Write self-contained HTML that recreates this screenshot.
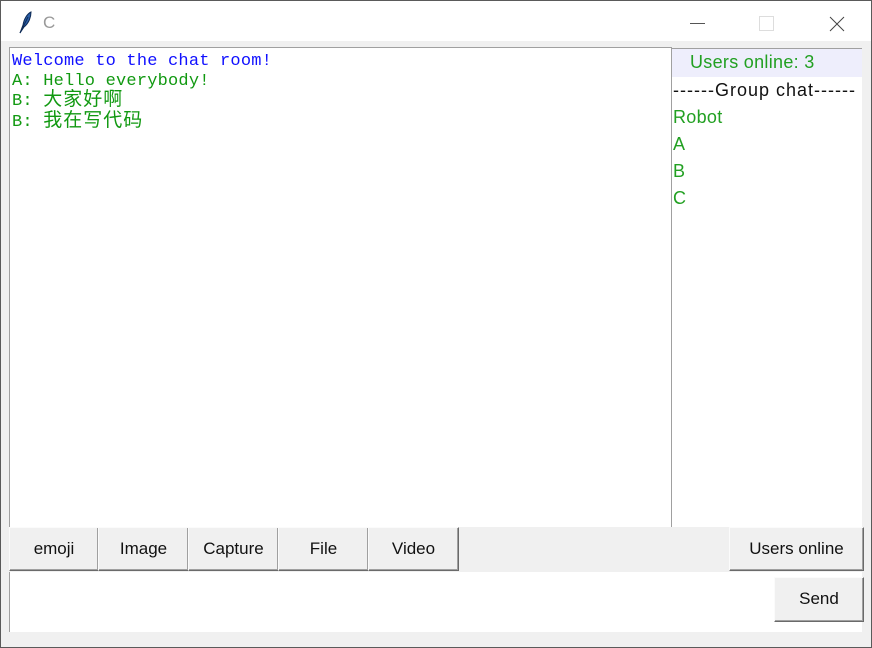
<!DOCTYPE html>
<html><head><meta charset="utf-8"><style>
*{margin:0;padding:0;box-sizing:border-box}
body{width:872px;height:648px;overflow:hidden;background:#f0f0f0;position:relative;font-family:"Liberation Sans","Noto Sans CJK SC",sans-serif}
.win{position:absolute;left:0;top:0;width:872px;height:648px;border:1px solid #5a5a5a;}
.title{position:absolute;left:0;top:0;width:870px;height:40px;background:#fff}
.a{position:absolute}
.chat{left:8px;top:46px;width:663px;height:480px;background:#fff;border-top:1px solid #a0a0a0;border-left:1px solid #a0a0a0;font-family:"Liberation Mono","Noto Sans CJK SC",monospace;font-size:17px;letter-spacing:0.2px;line-height:19.5px;padding:4px 0 0 2px;color:#119911}
.chat span{font-size:19px;letter-spacing:1px}
.list{left:670px;top:47px;width:191px;height:479px;background:#fff;border-left:1px solid #a0a0a0;border-top:1px solid #a0a0a0;font-size:18px;letter-spacing:0.3px;color:#22a022}
.list div{height:27px;line-height:27px;padding-left:1px;white-space:nowrap}
.btn{position:absolute;background:#f0f0f0;border:1px solid;border-color:#fbfbfb #6a6a6a #6a6a6a #fbfbfb;box-shadow:inset -1px -1px 0 #a0a0a0;font-size:17px;color:#111;text-align:center;line-height:42px;height:44px}
</style></head><body><div class="win">
<div class="title">
<svg class="a" style="left:16px;top:10px" width="16" height="24" viewBox="0 0 16 24"><path d="M3 22 L6 14 C7 8 10 3 14 1 C14 6 12 12 7 16 Z" fill="#2b5fa8" stroke="#0d2a55" stroke-width="1"/><path d="M3 22 L11 6" stroke="#0d2a55" stroke-width="1"/></svg>
<div class="a" style="left:42px;top:12px;font-size:17px;color:#999">C</div>
<div class="a" style="left:689px;top:22px;width:15px;height:1px;background:#555"></div>
<div class="a" style="left:758px;top:15px;width:15px;height:15px;border:1px solid #ddd"></div>
<svg class="a" style="left:828px;top:15px" width="16" height="16"><path d="M1 1L15 15M15 1L1 15" stroke="#444" stroke-width="1"/></svg>
</div>
<div class="a chat"><div style="color:#1010ff">Welcome to the chat room!</div><div>A: Hello everybody!</div><div>B: <span>大家好啊</span></div><div>B: <span>我在写代码</span></div></div>
<div class="a list"><div style="background:#eeeefc;padding-left:18px;height:28px">Users online: 3</div><div style="color:#111;letter-spacing:1px">------Group chat------</div><div>Robot</div><div>A</div><div>B</div><div>C</div></div>
<div class="btn" style="left:8px;top:526px;width:90px">emoji</div>
<div class="btn" style="left:97px;top:526px;width:91px">Image</div>
<div class="btn" style="left:187px;top:526px;width:91px">Capture</div>
<div class="btn" style="left:277px;top:526px;width:91px">File</div>
<div class="btn" style="left:367px;top:526px;width:91px">Video</div>
<div class="btn" style="left:728px;top:526px;width:135px">Users online</div>
<div class="a" style="left:8px;top:571px;width:765px;height:60px;background:#fff;border-left:1px solid #a0a0a0"></div>
<div class="a" style="left:773px;top:571px;width:88px;height:60px;background:#fff"></div>
<div class="btn" style="left:773px;top:576px;width:90px;height:45px">Send</div>
</div></body></html>
